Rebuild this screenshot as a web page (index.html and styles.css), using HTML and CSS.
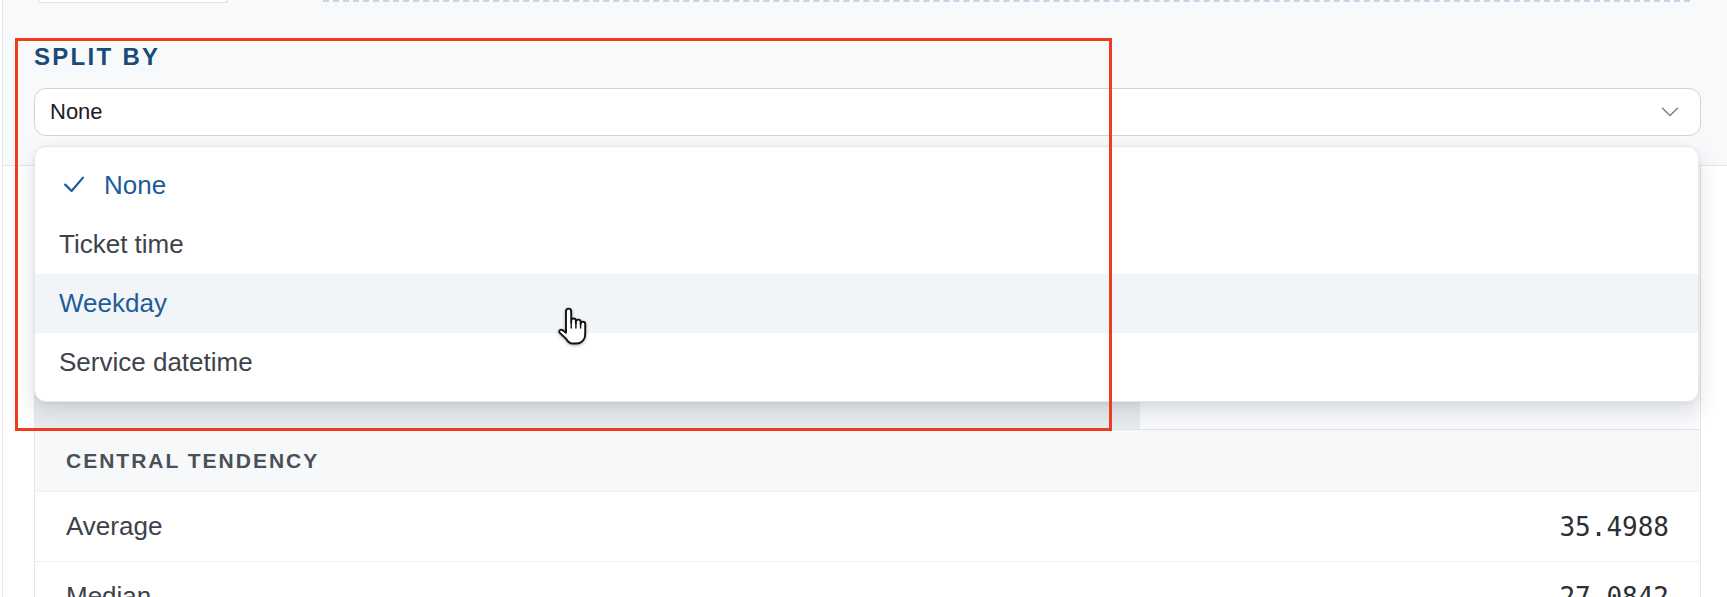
FILE: index.html
```html
<!DOCTYPE html>
<html lang="en">
<head>
<meta charset="utf-8">
<title>Split by</title>
<link rel="stylesheet" href="styles.css">
</head>
<body>
<div class="page">
  <section class="filters">
    <div class="top-row">
      <div class="prev-btn"></div>
      <div class="dropzone"></div>
    </div>
    <div class="label">SPLIT BY</div>
    <div class="select-wrap">
      <div class="select">
        <span class="select-value">None</span>
        <svg class="chevron" width="18" height="10" viewBox="0 0 18 10"><path d="M1.5 1.2 L9 8.5 L16.5 1.2" fill="none" stroke="#80858c" stroke-width="1.6" stroke-linecap="round" stroke-linejoin="round"/></svg>
      </div>
      <ul class="menu">
        <li class="option selected">
          <svg class="check" width="20" height="17" viewBox="0 0 20 17"><path d="M1.2 8.6 L7.6 15 L19 1.6" fill="none" stroke="#1d5c98" stroke-width="2.2" stroke-linecap="round" stroke-linejoin="round"/></svg>
          <span>None</span>
        </li>
        <li class="option">Ticket time</li>
        <li class="option hover">Weekday</li>
        <li class="option">Service datetime</li>
      </ul>
    </div>
  </section>

  <section class="content">
    <div class="card">
      <div class="card-top">
        <div class="chart-area"></div>
        <div class="tabbar">
          <div class="tab active"></div>
          <div class="tab"></div>
        </div>
      </div>
      <div class="group-head">CENTRAL TENDENCY</div>
      <div class="stat-row"><span class="stat-label">Average</span><span class="stat-value">35.4988</span></div>
      <div class="stat-row"><span class="stat-label">Median</span><span class="stat-value">27.0842</span></div>
    </div>
  </section>

  <div class="highlight"></div>

  <svg class="cursor" width="32" height="40" viewBox="0 0 32 40">
    <path d="M9 22 V4.2 a2.6 2.6 0 0 1 5.2 0 V15.5 V13.8 a2.35 2.35 0 0 1 4.7 0 V16.5 V15 a2.35 2.35 0 0 1 4.7 0 V17.5 V17 a2.3 2.3 0 0 1 4.6 0 V27.5 c0 5.2 -3.6 9 -8.6 9 h-3.8 c-3 0 -4.8 -1.6 -6.6 -4.6 L2.6 25.6 c-1.1 -1.9 0.9 -3.8 2.8 -2.5 L9 25.8 Z" fill="#fff" stroke="#111" stroke-width="1.9" stroke-linejoin="round"/>
    <path d="M14.2 16 V21 M18.9 16.8 V21 M23.6 17.6 V21" fill="none" stroke="#111" stroke-width="1.4" stroke-linecap="round"/>
  </svg>
</div>
</body>
</html>
```

FILE: styles.css
```css
* { box-sizing: border-box; }

html, body {
  margin: 0;
  padding: 0;
  background: #ffffff;
}

body {
  font-family: "Liberation Sans", Arial, Helvetica, sans-serif;
  color: #3d424a;
  overflow: hidden;
}

.page {
  position: relative;
  margin-left: 2px;
  border-left: 1px solid #e4e6e9;
  min-height: 597px;
  width: 1725px;
}

/* ---------- filters ---------- */
.filters {
  background: #f8f9fb;
  border-bottom: 1px solid #e2e4e8;
  padding: 0 26px 29px 31px;
}

.top-row {
  display: flex;
  height: 3px;
}

.prev-btn {
  width: 190px;
  margin-left: 4px;
  height: 3px;
  background: #ffffff;
  border: 1px solid #dcdfe3;
  border-top: none;
  border-radius: 0 0 8px 8px;
}

.dropzone {
  width: 1367px;
  margin-left: 95px;
  height: 2px;
  border-bottom: 2px dashed #c8d4e4;
}

.label {
  margin-top: 40px;
  height: 28px;
  line-height: 28px;
  font-size: 24px;
  font-weight: 700;
  letter-spacing: 2.3px;
  color: #184a7a;
}

.select-wrap {
  position: relative;
  margin-top: 17px;
}

.select {
  display: flex;
  align-items: center;
  justify-content: space-between;
  height: 48px;
  padding: 0 21px 0 15px;
  background: #ffffff;
  border: 1.5px solid #cfd2d7;
  border-radius: 12px;
}

.select-value {
  font-size: 22px;
  color: #1b1c1f;
}

.chevron { display: block; }

/* ---------- menu ---------- */
.menu {
  position: absolute;
  z-index: 5;
  top: calc(100% + 10px);
  left: 0;
  width: 1665px;
  margin: 0;
  padding: 9px 0 9px;
  list-style: none;
  background: #ffffff;
  border: 1px solid #e4e6e9;
  border-radius: 12px;
  box-shadow: 0 10px 22px rgba(30, 41, 59, 0.14), 0 2px 5px rgba(30, 41, 59, 0.05);
}

.option {
  display: flex;
  align-items: center;
  height: 59px;
  padding-left: 24px;
  font-size: 26px;
  color: #3e434b;
}

.option.selected { color: #1d5c98; }

.option.hover {
  background: #f2f5f8;
  color: #1d5c98;
}

.check {
  display: block;
  margin-left: 5px;
  margin-right: 20px;
  margin-top: -3px;
}

/* ---------- content ---------- */
.content {
  padding: 0 26px 0 31px;
}

.card {
  border-left: 1px solid #e3e5e8;
  border-right: 1px solid #e3e5e8;
  background: #ffffff;
}

.card-top {
  display: flex;
  flex-direction: column;
  height: 263px;
}

.chart-area { flex: 1; }

.tabbar {
  display: flex;
  height: 50px;
}

.tab {
  flex: 1;
  background: #fafbfc;
}

.tab.active {
  flex: 0 0 1105px;
  background: #e9ecef;
}

.group-head {
  height: 63px;
  line-height: 61px;
  padding-left: 31px;
  background: #f7f8fa;
  border-top: 1px solid #dfe1e5;
  border-bottom: 1px solid #eef0f2;
  font-size: 21px;
  font-weight: 700;
  letter-spacing: 2px;
  color: #4b5058;
}

.stat-row {
  display: flex;
  align-items: center;
  justify-content: space-between;
  height: 70px;
  padding: 0 31px;
  border-bottom: 1px solid #eef0f2;
}

.stat-label {
  font-size: 26px;
  color: #3d424a;
}

.stat-value {
  font-family: "DejaVu Sans Mono", "Liberation Mono", monospace;
  font-size: 26px;
  color: #2b2f36;
}

/* ---------- overlays ---------- */
.highlight {
  position: absolute;
  left: 12px;
  top: 38px;
  width: 1097px;
  height: 393px;
  border: 3.5px solid #ef3b1e;
  z-index: 10;
  pointer-events: none;
}

.cursor {
  position: absolute;
  left: 554px;
  top: 307px;
  z-index: 11;
  filter: drop-shadow(0 1px 1.5px rgba(0, 0, 0, 0.35));
}
```
